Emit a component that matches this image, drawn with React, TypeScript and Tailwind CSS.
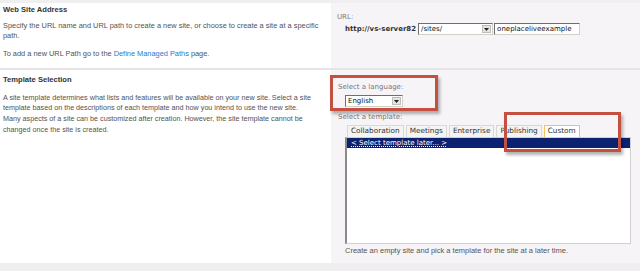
import React from "react";

const tahoma = "font-['Liberation_Sans',Arial,sans-serif]";
const verdana = "font-['DejaVu_Sans',Verdana,sans-serif]";

function SelectBox({ value, width }: { value: string; width: string }) {
  return (
    <div
      className={`flex h-[12px] items-stretch border border-t-[#6f6f6f] border-l-[#6f6f6f] border-r-[#d4d0c8] border-b-[#d4d0c8] bg-white ${width}`}
    >
      <span className={`flex-1 truncate pl-[2px] text-[7px] leading-[10px] text-[#111] ${verdana}`}>{value}</span>
      <span className="m-[1px] flex w-[9px] items-center justify-center border border-[#bdbdbd] bg-[#e4e4e4]">
        <svg width="5" height="3" viewBox="0 0 5 3">
          <path d="M0 0h5L2.5 3z" fill="#222" />
        </svg>
      </span>
    </div>
  );
}

function Tab({ label, active }: { label: string; active?: boolean }) {
  return (
    <div
      className={`h-[12px] border px-[3px] text-[7.3px] leading-[10px] text-[#333] ${verdana} ${
        active ? "border-[#f2c35b] border-b-0 bg-white" : "border-[#d8d8d8] border-b-0 bg-[#f4f4f4]"
      }`}
    >
      {label}
    </div>
  );
}

export default function App() {
  return (
    <div className={`flex h-[271px] w-[640px] flex-col overflow-hidden bg-white ${tahoma}`}>
      <div className="h-[3px] bg-[#efefef]" />

      {/* Web Site Address */}
      <div className="grid h-[65px] grid-cols-[331px_1fr]">
        <div className="px-[3px] pt-[2px] text-[7.4px] text-[#525252]">
          <div className="text-[7.6px] leading-[10.5px] font-bold text-[#333]">Web Site Address</div>
          <p className="mt-[5px] leading-[10.5px]">
            Specify the URL name and URL path to create a new site, or choose to create a site at a specific path.
          </p>
          <p className="mt-[7px] leading-[10.5px]">
            To add a new URL Path go to the <span className="text-[#2a78cc]">Define Managed Paths</span> page.
          </p>
        </div>
        <div className="bg-[#f7f4f8] pl-[6px] pt-[9px]">
          <div className={`text-[7px] leading-[10px] text-[#777] ${verdana}`}>URL:</div>
          <div className="mt-[1px] flex items-center pl-[8px]">
            <span className={`mr-[2px] text-[7px] font-bold text-[#333] ${verdana}`}>http://vs-server82</span>
            <SelectBox value="/sites/" width="w-[75px]" />
            <div
              className={`ml-[1px] h-[12px] w-[86px] border border-t-[#6f6f6f] border-l-[#6f6f6f] border-r-[#d4d0c8] border-b-[#d4d0c8] bg-white pl-[2px] text-[7px] leading-[10px] text-[#111] ${verdana}`}
            >
              oneplaceliveexample
            </div>
          </div>
        </div>
      </div>

      <div className="h-[2px] bg-[#e6e3e6]" />

      {/* Template Selection */}
      <div className="grid flex-1 grid-cols-[331px_1fr]">
        <div className="px-[3px] pt-[5px] text-[#525252]">
          <div className="text-[7.6px] leading-[10.5px] font-bold text-[#333]">Template Selection</div>
          <p className="mt-[7px] whitespace-nowrap text-[7.2px] leading-[10.7px]">
            A site template determines what lists and features will be available on your new site. Select a site
            <br />
            template based on the descriptions of each template and how you intend to use the new site.
            <br />
            Many aspects of a site can be customized after creation. However, the site template cannot be
            <br />
            changed once the site is created.
          </p>
        </div>
        <div className="relative bg-[#f7f4f8] pl-[7px] pr-[9px] pt-[12px]">
          <div className={`text-[7px] leading-[10px] text-[#777] ${verdana}`}>Select a language:</div>
          <div className="mt-[3px] pl-[7px]">
            <SelectBox value="English" width="w-[58px]" />
          </div>
          <div className={`mt-[5px] text-[7px] leading-[10px] text-[#777] ${verdana}`}>Select a template:</div>
          <div className="pl-[7px]">
            <div className="mt-[3px] flex gap-[2px] pl-[2px]">
              <Tab label="Collaboration" />
              <Tab label="Meetings" />
              <Tab label="Enterprise" />
              <Tab label="Publishing" />
              <Tab label="Custom" active />
            </div>
            <div className="h-[107px] border border-[#d0d0d0] border-l-2 border-l-[#8a8a8a] bg-white">
              <div
                className={`h-[10px] bg-[#0c2270] pl-[4px] text-[7px] leading-[10px] text-white underline decoration-dotted ${verdana}`}
              >
                &lt; Select template later... &gt;
              </div>
            </div>
            <div className="mt-[2px] text-[7.5px] leading-[10px] text-[#555]">
              Create an empty site and pick a template for the site at a later time.
            </div>
          </div>

          <div className="absolute left-[-1px] top-[5px] h-[36px] w-[108px] border-[3px] border-[#c4513f] shadow-[2px_3px_3px_rgba(0,0,0,0.3)]" />
          <div className="absolute left-[173px] top-[42px] h-[40px] w-[117px] border-[3px] border-[#c4513f] shadow-[2px_3px_3px_rgba(0,0,0,0.3)]" />
        </div>
      </div>

      <div className="h-[8px] bg-[#f0eff0]" />
    </div>
  );
}
